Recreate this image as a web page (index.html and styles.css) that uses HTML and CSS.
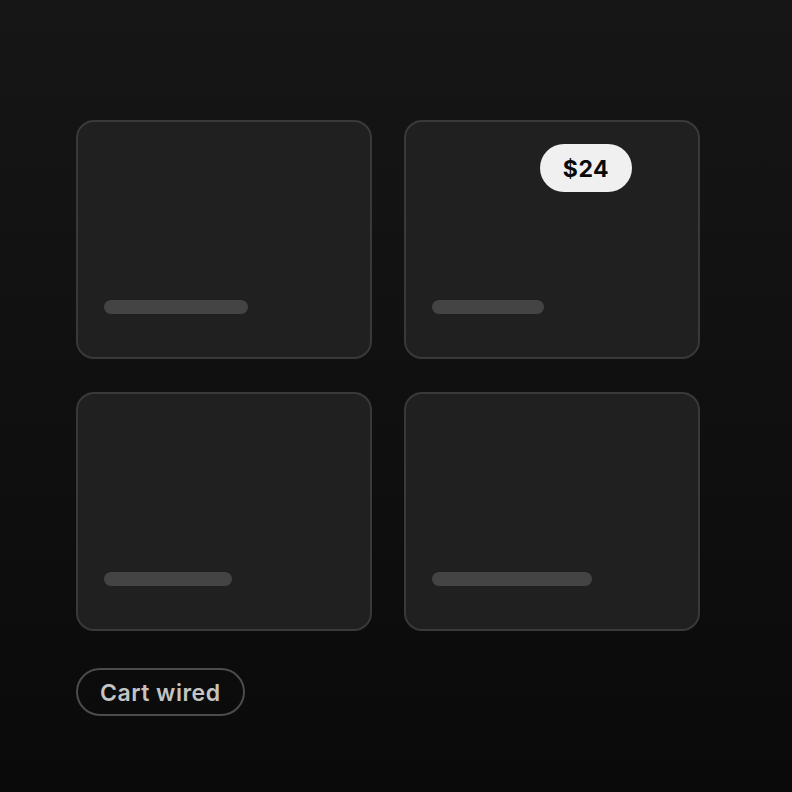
FILE: index.html
```html
<!DOCTYPE html>
<html>
<head>
<meta charset="utf-8">
<link rel="stylesheet" href="styles.css">
</head>
<body>
<main class="page">
  <section class="grid">
    <div class="card"><div class="bar" style="width:144px"></div></div>
    <div class="card">
      <span class="price">$24</span>
      <div class="bar" style="width:112px"></div>
    </div>
    <div class="card"><div class="bar" style="width:128px"></div></div>
    <div class="card"><div class="bar" style="width:160px"></div></div>
  </section>
  <div class="status">Cart wired</div>
</main>
</body>
</html>
```

FILE: styles.css
```css
html, body {
  margin: 0;
  padding: 0;
}
body {
  width: 792px;
  height: 792px;
  background: linear-gradient(180deg, #161616 0%, #0a0a0a 100%);
  font-family: Inter, "Liberation Sans", sans-serif;
  overflow: hidden;
}
.page {
  padding: 120px 0 0 76px;
  display: flex;
  flex-direction: column;
  align-items: flex-start;
  gap: 37px;
}
.grid {
  display: grid;
  grid-template-columns: 296px 296px;
  grid-auto-rows: 239px;
  column-gap: 32px;
  row-gap: 33px;
}
.card {
  position: relative;
  box-sizing: border-box;
  background: #202020;
  border: 2px solid #393939;
  border-radius: 18px;
  display: flex;
  flex-direction: column;
  justify-content: flex-end;
  padding: 0 26px 43px;
}
.bar {
  height: 14px;
  border-radius: 7px;
  background: #444444;
}
.price {
  position: absolute;
  left: 134px;
  top: 22px;
  width: 92px;
  height: 48px;
  border-radius: 24px;
  background: #f0f0f0;
  color: #0a0a0a;
  font-size: 23px;
  font-weight: 700;
  letter-spacing: 0.6px;
  display: flex;
  align-items: center;
  justify-content: center;
  padding-top: 2px;
  box-sizing: border-box;
}
.status {
  box-sizing: border-box;
  height: 48px;
  padding: 0 22px;
  border: 2px solid #4c4c4c;
  border-radius: 24px;
  color: #c4c4c4;
  font-size: 23px;
  font-weight: 600;
  letter-spacing: 0.5px;
  display: flex;
  align-items: center;
  padding-top: 1px;
}
```
